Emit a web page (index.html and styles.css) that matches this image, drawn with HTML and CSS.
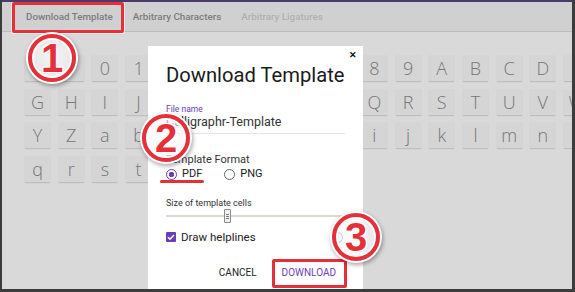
FILE: index.html
```html
<!DOCTYPE html>
<html lang="en">
<head>
  <meta charset="UTF-8" />
  <meta name="viewport" content="width=device-width, initial-scale=1.0" />
  <title>Calligraphr - Templates</title>
  <link rel="stylesheet" href="styles.css">
</head>
<body>
  <div class="window">
    <div class="tabs">
      <span class="tab active">Download Template</span>
      <span class="tab">Arbitrary Characters</span>
      <span class="tab muted">Arbitrary Ligatures</span>
    </div>

    <div class="keys" id="keys"></div>

    <div class="dialog">
      <span class="close">&#x2715;</span>
      <h2 class="dialog-title">Download Template</h2>

      <div class="field">
        <label class="field-label">File name</label>
        <div class="field-input">Calligraphr-Template</div>
      </div>

      <div class="group-label">Template Format</div>
      <div class="radios">
        <span class="radio checked"><i></i>PDF</span>
        <span class="radio"><i></i>PNG</span>
      </div>

      <div class="small-label">Size of template cells</div>
      <div class="slider">
        <div class="track"></div>
        <div class="thumb"><b></b><b></b><b></b></div>
      </div>

      <div class="check-row">
        <span class="checkbox">
          <svg width="10" height="10" viewBox="0 0 10 10"><path d="M2 5.2l2 2L8 3" fill="none" stroke="#fff" stroke-width="1.6"/></svg>
        </span>
        <span>Draw helplines</span>
        <span class="info">i</span>
      </div>

      <div class="actions">
        <span class="btn">CANCEL</span>
        <span class="btn primary">DOWNLOAD</span>
      </div>
    </div>

    <!-- annotations -->
    <div class="mark-box box1"></div>
    <div class="mark-box box3"></div>
    <div class="mark-line"></div>
    <div class="num n1">1</div>
    <div class="num n2">2</div>
    <div class="num n3">3</div>
  </div>

  <script>
    const rows = [
      ",.0123456789ABCDEF",
      "GHIJKLMNOPQRSTUVWX",
      "YZabcdefghijklmnop",
      "qrstuvwxyz"
    ];
    const keys = document.getElementById("keys");
    rows.forEach(function (row) {
      for (const ch of row) {
        const k = document.createElement("span");
        k.className = "key";
        k.textContent = ch;
        keys.appendChild(k);
      }
    });
  </script>
</body>
</html>
```
FILE: styles.css
```css
body {
  margin: 0;
  background-color: #3c3c3c;
  font-family: Roboto, 'Liberation Sans', sans-serif;
  overflow: hidden;
}

.window {
  position: relative;
  margin-left: 2px;
  width: 570px;
  height: 287px;
  border-top: 2px solid #4a3b6b;
  background-color: #d9d9d9;
  overflow: hidden;
}

.tabs {
  display: flex;
  gap: 20px;
  align-items: center;
  height: 29px;
  padding-left: 24px;
  background-color: #d0d0d0;
  border-bottom: 1px solid #bcbcbc;
  font-size: 9.8px;
  font-weight: 500;
}

.tab {
  color: #7c7c7c;
}

.tab.muted {
  color: #b0b0b0;
}

.keys {
  display: grid;
  grid-template-columns: repeat(18, 25px);
  grid-auto-rows: 26px;
  column-gap: 8.7px;
  row-gap: 7.6px;
  padding: 23px 0 0 23px;
  width: 700px;
}

.key {
  display: flex;
  justify-content: center;
  align-items: center;
  background-color: #d5d5d5;
  box-shadow: 0 1px 1px rgba(0, 0, 0, 0.12);
  font-family: 'Open Sans', sans-serif;
  font-weight: 300;
  font-size: 18px;
  color: #767676;
}

.dialog {
  position: absolute;
  left: 146px;
  top: 44px;
  width: 179px;
  height: 260px;
  padding: 16px 18px 0;
  background-color: #fff;
  color: #222;
}

.close {
  position: absolute;
  top: 4px;
  right: 6px;
  font-size: 9px;
  font-weight: 700;
  color: #111;
}

.dialog-title {
  margin: 0;
  font-size: 20.2px;
  font-weight: 400;
  line-height: 26px;
  white-space: nowrap;
  color: #1a1a1a;
}

.field {
  margin-top: 16px;
}

.field-label {
  display: block;
  font-size: 8.5px;
  line-height: 10px;
  color: #6a3db8;
}

.field-input {
  font-size: 12.5px;
  line-height: 16px;
  padding-bottom: 3px;
  border-bottom: 1px solid #e4e4e4;
  color: #333;
}

.group-label {
  margin-top: 19px;
  font-size: 11px;
  line-height: 13px;
  color: #333;
}

.radios {
  display: flex;
  gap: 22px;
  margin-top: 1px;
  font-size: 11px;
  line-height: 14px;
  color: #222;
}

.radio {
  display: flex;
  align-items: center;
  gap: 5px;
}

.radio i {
  box-sizing: border-box;
  width: 11px;
  height: 11px;
  border: 1.5px solid #666;
  border-radius: 50%;
}

.radio.checked i {
  border-color: #6a3db8;
  background: radial-gradient(circle, #6a3db8 0 2.4px, #fff 3px);
}

.small-label {
  margin-top: 17px;
  font-size: 9px;
  line-height: 11px;
  color: #333;
}

.slider {
  position: relative;
  height: 16px;
}

.track {
  position: absolute;
  left: 0;
  right: -4px;
  top: 6px;
  height: 2px;
  background-color: #dcd8d2;
}

.thumb {
  position: absolute;
  left: 58px;
  top: 0;
  box-sizing: border-box;
  width: 7px;
  height: 14px;
  padding-top: 4px;
  background-color: #f2f2f2;
  border: 1px solid #8a8a8a;
  border-radius: 1px;
}

.thumb b {
  display: block;
  height: 1px;
  margin: 0 1px 1px;
  background-color: #777;
}

.check-row {
  display: flex;
  align-items: center;
  gap: 5px;
  margin-top: 5px;
  font-size: 11.5px;
  line-height: 14px;
  color: #222;
}

.checkbox {
  display: flex;
  width: 10px;
  height: 10px;
  border-radius: 1px;
  background-color: #6a3db8;
}

.info {
  margin-left: auto;
  margin-right: 2px;
  width: 9px;
  height: 9px;
  border: 1px solid #777;
  border-radius: 50%;
  font-size: 7px;
  line-height: 9px;
  text-align: center;
  color: #777;
}

.actions {
  display: flex;
  justify-content: flex-end;
  gap: 25px;
  margin-top: 23px;
  padding-right: 9px;
  font-size: 10px;
  font-weight: 400;
}

.btn {
  color: #222;
}

.btn.primary {
  color: #6a3db8;
}

/* annotation overlays */
.mark-box {
  position: absolute;
  border: 3px solid #e5303a;
  border-radius: 2px;
  box-shadow: 0 0 0 1px rgba(255, 255, 255, 0.6);
}

.box1 {
  left: 10px;
  top: 0;
  width: 106px;
  height: 25px;
}

.box3 {
  left: 270px;
  top: 257px;
  width: 69px;
  height: 23px;
}

.mark-line {
  position: absolute;
  left: 158px;
  top: 178px;
  width: 44px;
  height: 3px;
  border-radius: 2px;
  background-color: #e5303a;
}

.num {
  position: absolute;
  box-sizing: border-box;
  width: 48px;
  height: 48px;
  border: 4px solid #e5303a;
  border-radius: 50%;
  background: radial-gradient(circle, rgba(255, 255, 255, 0.75), rgba(235, 235, 235, 0.55));
  box-shadow: 0 0 0 2px #fff, inset 0 0 0 2px #fff, 1px 2px 4px 2px rgba(0, 0, 0, 0.35);
  font-family: 'Liberation Sans', Arial, sans-serif;
  font-weight: 700;
  font-size: 40px;
  line-height: 40px;
  text-align: center;
  color: #e5303a;
  text-shadow: -1px -1px 0 #fff, 1px -1px 0 #fff, -1px 1px 0 #fff, 1px 1px 0 #fff;
}

.n1 {
  left: 26px;
  top: 32px;
}

.n2 {
  left: 140px;
  top: 112px;
}

.n3 {
  left: 330px;
  top: 211px;
}
```
